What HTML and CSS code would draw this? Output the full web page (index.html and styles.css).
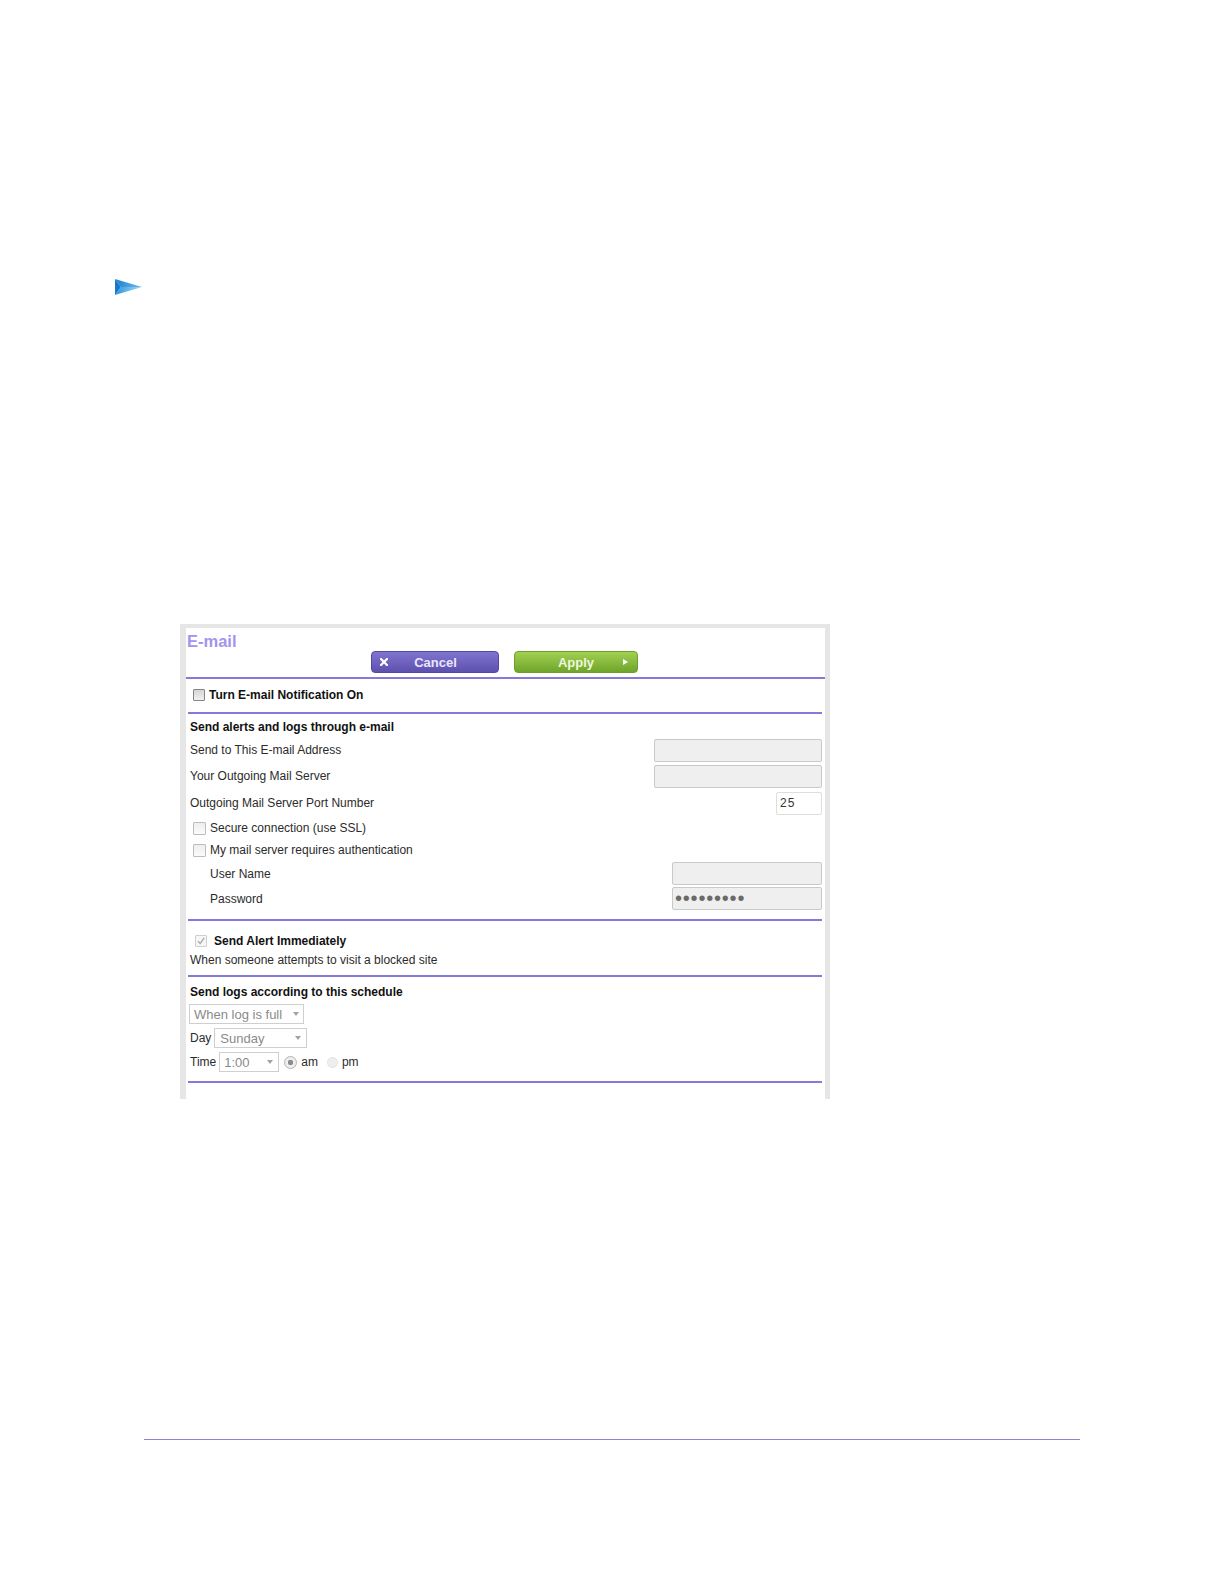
FILE: index.html
```html
<!DOCTYPE html>
<html lang="en">

<head>
    <meta charset="UTF-8">
    <meta name="viewport" content="width=device-width, initial-scale=1.0">
    <title>E-mail</title>
    <link rel="stylesheet" href="styles.css">
</head>

<body>
    <div class="step">
        <svg class="step-arrow" width="27" height="16" viewBox="0 0 27 16">
            <defs>
                <linearGradient id="arrowTop" x1="0" y1="0" x2="1" y2="0">
                    <stop offset="0" stop-color="#1c7fd0" />
                    <stop offset="1" stop-color="#6cc0ee" />
                </linearGradient>
                <linearGradient id="arrowBottom" x1="0" y1="0" x2="1" y2="0">
                    <stop offset="0" stop-color="#2d95dc" />
                    <stop offset="1" stop-color="#a3daf6" />
                </linearGradient>
            </defs>
            <polygon points="0,0 27,8 6,8" fill="url(#arrowTop)" />
            <polygon points="0,16 27,8 6,8" fill="url(#arrowBottom)" />
            <polygon points="0,0 6,8 0,16" fill="#1a78c9" />
        </svg>
    </div>

    <div class="shot">
        <h1 class="title">E-mail</h1>

        <div class="actions">
            <div class="btn btn-cancel">
                <svg class="btn-x" width="8" height="8" viewBox="0 0 8 8">
                    <path d="M1 1 L7 7 M7 1 L1 7" stroke="#ffffff" stroke-width="2.2" stroke-linecap="square" />
                </svg>
                <span class="btn-label">Cancel</span>
            </div>
            <div class="btn btn-apply">
                <span class="btn-label">Apply</span>
                <span class="btn-play"></span>
            </div>
        </div>

        <div class="rule rule-full"></div>

        <div class="row-top">
            <span class="box box-dark"></span>
            <b>Turn E-mail Notification On</b>
        </div>

        <div class="rule"></div>

        <!-- 邮件服务器设置 -->
        <div class="section section-mail">
            <div class="head">Send alerts and logs through e-mail</div>
            <div class="field">
                <span>Send to This E-mail Address</span>
                <span class="input input-wide"></span>
            </div>
            <div class="field">
                <span>Your Outgoing Mail Server</span>
                <span class="input input-wide"></span>
            </div>
            <div class="field field-port">
                <span>Outgoing Mail Server Port Number</span>
                <span class="input input-port">25</span>
            </div>
            <div class="check">
                <span class="box"></span>
                <span>Secure connection (use SSL)</span>
            </div>
            <div class="check">
                <span class="box"></span>
                <span>My mail server requires authentication</span>
            </div>
            <div class="field field-sub">
                <span>User Name</span>
                <span class="input input-mid"></span>
            </div>
            <div class="field field-sub">
                <span>Password</span>
                <span class="input input-mid input-pass">•••••••••</span>
            </div>
        </div>

        <div class="rule"></div>

        <div class="section section-alert">
            <div class="alert">
                <span class="box box-checked">
                    <svg width="10" height="10" viewBox="0 0 10 10">
                        <path d="M2 5.2 L4.2 7.4 L8.2 1.8" fill="none" stroke="#a9a9a9" stroke-width="1.3" />
                    </svg>
                </span>
                <b>Send Alert Immediately</b>
            </div>
            <div class="line">When someone attempts to visit a blocked site</div>
        </div>

        <div class="rule"></div>

        <div class="section section-schedule">
            <div class="head">Send logs according to this schedule</div>
            <div class="pick">
                <span class="select select-when"><span>When log is full</span><span class="caret"></span></span>
            </div>
            <div class="pick">
                <span>Day</span>
                <span class="select select-day"><span>Sunday</span><span class="caret"></span></span>
            </div>
            <div class="pick">
                <span>Time</span>
                <span class="select select-time"><span>1:00</span><span class="caret"></span></span>
                <span class="radio radio-on"></span>
                <span>am</span>
                <span class="radio radio-off"></span>
                <span>pm</span>
            </div>
        </div>

        <div class="rule"></div>
    </div>

    <div class="footer-rule"></div>
</body>

</html>
```

FILE: styles.css
```css
body {
    margin: 0;
    background-color: #ffffff;
    font-family: "Liberation Sans", Arial, sans-serif;
    font-size: 12px;
    color: #2b2b2b;
}

.step {
    padding: 279px 0 0 115px;
    height: 16px;
}

.step-arrow {
    display: block;
}

/* 截图外框 */
.shot {
    margin: 329px 0 0 180px;
    width: 650px;
    height: 475px;
    box-sizing: border-box;
    border-style: solid;
    border-color: #e6e6e6;
    border-width: 4px 5px 0 6px;
    background-color: #ffffff;
}

.title {
    margin: 3px 0 0 1px;
    font-size: 16.5px;
    font-weight: bold;
    line-height: 20px;
    color: #a294ec;
}

.actions {
    display: flex;
    gap: 15px;
    margin-left: 185px;
    height: 22px;
}

.btn {
    display: flex;
    align-items: center;
    box-sizing: border-box;
    height: 22px;
    border-radius: 4px;
    font-size: 13px;
    font-weight: bold;
}

.btn-cancel {
    width: 128px;
    padding-left: 8px;
    background: linear-gradient(#7f74cf, #5d51ad);
    border: 1px solid #5548a3;
    color: #e9e6fb;
}

.btn-cancel .btn-label {
    flex: 1;
    text-align: center;
    padding-right: 15px;
}

.btn-x {
    display: block;
}

.btn-apply {
    width: 124px;
    padding-right: 9px;
    background: linear-gradient(#a2d052, #6fa52b);
    border: 1px solid #6c9f2c;
    color: #eef7df;
}

.btn-apply .btn-label {
    flex: 1;
    text-align: center;
    padding-left: 14px;
}

.btn-play {
    width: 0;
    height: 0;
    border-top: 3px solid transparent;
    border-bottom: 3px solid transparent;
    border-left: 5px solid #ffffff;
}

.rule {
    height: 2px;
    margin: 0 3px 0 2px;
    background-color: #8579d9;
}

.rule-full {
    margin: 4px 0 0 0;
}

.row-top {
    display: flex;
    align-items: center;
    gap: 4px;
    padding: 6px 0 7px 7px;
    line-height: 20px;
    color: #111111;
}

.box {
    display: inline-flex;
    align-items: center;
    justify-content: center;
    box-sizing: border-box;
    width: 13px;
    height: 13px;
    border: 1px solid #bdbdbd;
    border-radius: 1px;
    background: linear-gradient(#eeeeee, #fbfbfb);
}

.box-dark {
    width: 12px;
    height: 12px;
    border-color: #858585;
    background: linear-gradient(#d6d6d6, #f0f0f0);
}

.box-checked {
    width: 12px;
    height: 12px;
    border-color: #cfcfcf;
    background: #f6f6f6;
}

.section {
    padding: 0 3px 0 4px;
}

.section-mail {
    padding-top: 3px;
    padding-bottom: 8px;
}

.section-alert {
    padding-top: 10px;
    padding-bottom: 6px;
}

.section-schedule {
    padding-top: 5px;
    padding-bottom: 7px;
}

.head {
    line-height: 20px;
    font-weight: bold;
    color: #111111;
}

.field {
    display: flex;
    align-items: center;
    justify-content: space-between;
    height: 26px;
}

.field-port {
    height: 28px;
}

.field-sub {
    height: 25px;
    padding-left: 20px;
}

.input {
    display: flex;
    align-items: center;
    box-sizing: border-box;
    height: 23px;
    border: 1px solid #c9c9c9;
    border-radius: 2px;
    background-color: #efefef;
}

.input-wide {
    width: 168px;
}

.input-mid {
    width: 150px;
}

.input-port {
    width: 46px;
    padding-left: 3px;
    border-color: #dedede;
    background-color: #ffffff;
    letter-spacing: 1px;
    color: #333333;
}

.input-pass {
    padding-left: 2px;
    font-size: 20px;
    letter-spacing: 0.8px;
    color: #6a6a6a;
}

.check {
    display: flex;
    align-items: center;
    gap: 4px;
    height: 22px;
    padding-left: 3px;
}

.alert {
    display: flex;
    align-items: center;
    gap: 7px;
    height: 20px;
    padding-left: 5px;
    color: #111111;
}

.line {
    line-height: 18px;
}

.pick {
    display: flex;
    align-items: center;
    height: 24px;
}

.select {
    display: flex;
    align-items: center;
    justify-content: space-between;
    box-sizing: border-box;
    height: 20px;
    border: 1px solid #cfcfcf;
    background-color: #ffffff;
    font-size: 13px;
    color: #8a8a8a;
}

.select-when {
    width: 115px;
    margin-left: -1px;
    padding: 0 4px 0 4px;
}

.select-day {
    width: 93px;
    margin-left: 3px;
    padding: 0 5px 0 5px;
}

.select-time {
    width: 60px;
    margin-left: 3px;
    padding: 0 5px 0 4px;
}

.caret {
    width: 0;
    height: 0;
    border-left: 3px solid transparent;
    border-right: 3px solid transparent;
    border-top: 4px solid #a3a3a3;
}

.radio {
    box-sizing: border-box;
    border-radius: 50%;
}

.radio-on {
    width: 13px;
    height: 13px;
    margin: 0 4px 0 5px;
    border: 1px solid #b3b3b3;
    background: radial-gradient(circle, #8d8d8d 0, #8d8d8d 2.5px, #eeeeee 3px);
}

.radio-off {
    width: 11px;
    height: 11px;
    margin: 0 4px 0 9px;
    border: 1px solid #e3e3e3;
    background-color: #eeeeee;
}

.footer-rule {
    margin: 340px 0 0 144px;
    width: 936px;
    height: 1px;
    background-color: #8c82d8;
}
```
